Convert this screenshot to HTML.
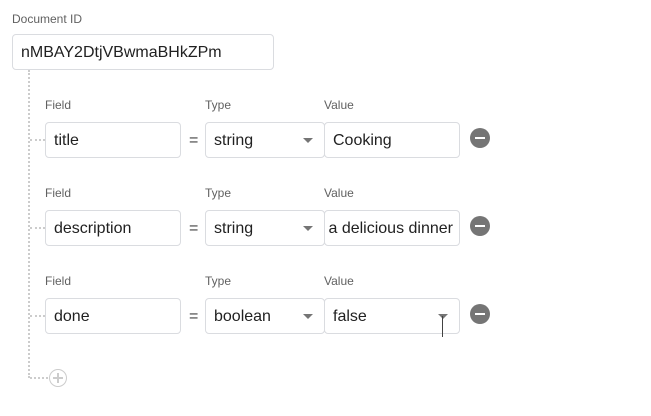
<!DOCTYPE html><html><head><style>
body{margin:0;width:651px;height:416px;background:#fff;font-family:"Liberation Sans",Roboto,sans-serif;position:relative;overflow:hidden}
.a{position:absolute}
.lbl{font-size:12px;color:#616161}
.box{position:absolute;height:36px;border:1px solid #dadce0;border-radius:4px;box-sizing:border-box;font-size:16px;color:#212121;line-height:36px;padding-left:8px;white-space:nowrap;overflow:hidden;background:#fff}
.arr{position:absolute;width:0;height:0;border-left:5px solid transparent;border-right:5px solid transparent;border-top:5px solid #757575}
.min{position:absolute;width:20px;height:20px;border-radius:50%;background:#757575}
.min:after{content:"";position:absolute;left:5px;top:9px;width:10px;height:2px;background:#fff}
.vd{position:absolute;border-left:2px dotted #ccc}
.hd{position:absolute;border-top:2px dotted #ccc}
</style></head><body>
<div class="a lbl" style="left:12px;top:12px">Document ID</div>
<div class="box" style="left:12px;top:34px;width:262px">nMBAY2DtjVBwmaBHkZPm</div>
<div class="vd" style="left:28px;top:70px;height:308px"></div>

<div class="a lbl" style="left:45px;top:98px">Field</div><div class="a lbl" style="left:205px;top:98px">Type</div><div class="a lbl" style="left:324px;top:98px">Value</div>
<div class="hd" style="left:30px;top:139px;width:15px"></div>
<div class="box" style="left:45px;top:122px;width:136px">title</div>
<div class="a" style="left:189px;top:132px;font-size:16px;color:#424242">=</div>
<div class="box" style="left:205px;top:122px;width:120px">string</div><div class="arr" style="left:303px;top:138px"></div>
<div class="box" style="left:324px;top:122px;width:136px">Cooking</div>
<div class="min" style="left:470px;top:128px"></div>

<div class="a lbl" style="left:45px;top:186px">Field</div><div class="a lbl" style="left:205px;top:186px">Type</div><div class="a lbl" style="left:324px;top:186px">Value</div>
<div class="hd" style="left:30px;top:227px;width:15px"></div>
<div class="box" style="left:45px;top:210px;width:136px">description</div>
<div class="a" style="left:189px;top:220px;font-size:16px;color:#424242">=</div>
<div class="box" style="left:205px;top:210px;width:120px">string</div><div class="arr" style="left:303px;top:226px"></div>
<div class="box" style="left:324px;top:210px;width:136px;padding-left:0"><span style="position:absolute;right:6px">a delicious dinner</span></div>
<div class="min" style="left:470px;top:216px"></div>

<div class="a lbl" style="left:45px;top:274px">Field</div><div class="a lbl" style="left:205px;top:274px">Type</div><div class="a lbl" style="left:324px;top:274px">Value</div>
<div class="hd" style="left:30px;top:315px;width:15px"></div>
<div class="box" style="left:45px;top:298px;width:136px">done</div>
<div class="a" style="left:189px;top:308px;font-size:16px;color:#424242">=</div>
<div class="box" style="left:205px;top:298px;width:120px">boolean</div><div class="arr" style="left:303px;top:314px"></div>
<div class="box" style="left:324px;top:298px;width:136px">false</div><div class="arr" style="left:438px;top:314px"></div>
<div class="a" style="left:442px;top:316px;width:1px;height:21px;background:#424242"></div>
<div class="min" style="left:470px;top:304px"></div>

<div class="hd" style="left:30px;top:377px;width:18px"></div>
<div class="a" style="left:49px;top:369px;width:18px;height:18px;border:1.5px solid #ccc;border-radius:50%;box-sizing:border-box"></div>
<div class="a" style="left:53px;top:377px;width:10px;height:1.5px;background:#ccc"></div>
<div class="a" style="left:57.25px;top:373px;width:1.5px;height:10px;background:#ccc"></div>
</body></html>
